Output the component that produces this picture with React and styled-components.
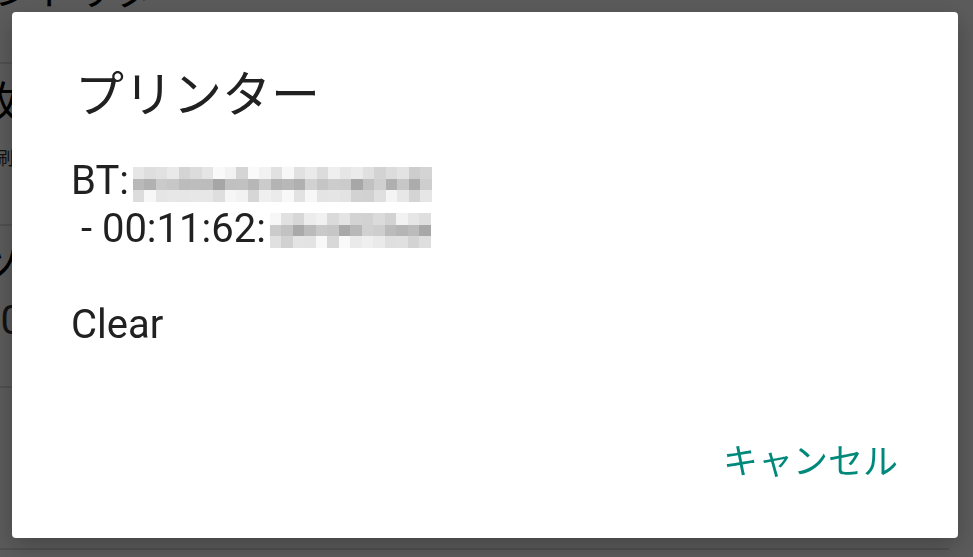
import React from "react";
import styled, { createGlobalStyle } from "styled-components";

const GlobalStyle = createGlobalStyle`
  html, body {
    margin: 0;
    padding: 0;
    background: #ffffff;
    overflow: hidden;
  }
  body {
    font-family: Roboto, "Noto Sans CJK JP", sans-serif;
    color: #212121;
  }
`;

// pixelated (blurred out) parts of the device name / MAC
const shade = (seed, row) => {
  const x = Math.sin(seed * 12.9898 + row * 78.233) * 43758.5453;
  const r = x - Math.floor(x);
  const base = row === 1 ? 165 : 205;
  return Math.round(base + r * 45);
};

const Mosaic = ({ cols, seed, drop }) => {
  const cells = [];
  for (let row = 0; row < 3; row++) {
    for (let c = 0; c < cols; c++) {
      const g = shade(seed + c, row);
      cells.push(
        <Cell key={`${row}-${c}`} style={{ background: `rgb(${g},${g},${g})` }} />
      );
    }
  }
  return (
    <MosaicWrap $drop={drop}>
      <MosaicGrid $cols={cols}>{cells}</MosaicGrid>
    </MosaicWrap>
  );
};

const App = () => {
  return (
    <React.Fragment>
      <GlobalStyle />
      <Screen>
        <TopRow>
          <TopText>ントリター</TopText>
        </TopRow>
        <Row>
          <RowTitle>枚数</RowTitle>
          <RowSub $size={18}>印刷</RowSub>
        </Row>
        <Row>
          <RowTitle>ツール</RowTitle>
          <RowSub $size={40}>20</RowSub>
        </Row>
        <Row />
      </Screen>
      <Scrim>
        <Dialog>
          <Title>プリンター</Title>
          <Body>
            <Line>
              BT:
              <Mosaic cols={26} seed={3} drop={8} />
            </Line>
            <Line>
              {" - 00:11:62:"}
              <Mosaic cols={14} seed={41} drop={6} />
            </Line>
            <Line />
            <Line>Clear</Line>
          </Body>
          <Actions>
            <TextButton>キャンセル</TextButton>
          </Actions>
        </Dialog>
      </Scrim>
    </React.Fragment>
  );
};

export default App;

const Screen = styled.div`
  width: 973px;
  height: 557px;
  margin-left: -24px;
  overflow: hidden;
`;

const TopRow = styled.div`
  height: 64px;
  display: flex;
  align-items: flex-start;
  padding-left: 18px;
  border-bottom: 2px solid #dedede;
  box-sizing: border-box;
`;

const TopText = styled.span`
  font-size: 40px;
  line-height: 40px;
  margin-top: -28px;
  color: #000;
`;

const Row = styled.div`
  height: 162px;
  box-sizing: border-box;
  border-bottom: 2px solid #dedede;
  padding: 14px 0 0 2px;
`;

const RowTitle = styled.div`
  font-size: 42px;
  line-height: 50px;
  color: #000;
`;

const RowSub = styled.div`
  font-size: ${(p) => p.$size}px;
  line-height: 50px;
  color: #333;
  margin-top: 6px;
`;

const Scrim = styled.div`
  position: fixed;
  inset: 0;
  background: rgba(0, 0, 0, 0.645);
  display: flex;
  padding: 12px 15px 19px 12px;
`;

const Dialog = styled.div`
  flex: 1;
  background: #ffffff;
  border-radius: 4px;
  display: flex;
  flex-direction: column;
  box-shadow: 0 8px 24px rgba(0, 0, 0, 0.25);
`;

const Title = styled.h2`
  margin: 0;
  padding: 50px 58px 0 63px;
  font-family: "Noto Sans CJK JP", sans-serif;
  font-weight: 400;
  font-size: 49px;
  line-height: 58px;
  color: #212121;
`;

const Body = styled.div`
  padding: 37px 58px 0 59px;
`;

const Line = styled.div`
  font-size: 40px;
  line-height: 48px;
  height: 48px;
  white-space: pre;
  color: #212121;
`;

const MosaicWrap = styled.span`
  display: inline-block;
  overflow: hidden;
  margin-left: 4px;
  vertical-align: -${(p) => p.$drop}px;
`;

const MosaicGrid = styled.div`
  display: grid;
  grid-template-columns: repeat(${(p) => p.$cols}, 11.5px);
  grid-auto-rows: 11.7px;
`;

const Cell = styled.div``;

const Actions = styled.div`
  margin-top: auto;
  display: flex;
  justify-content: flex-end;
  padding: 0 42px 47px 0;
`;

const TextButton = styled.button`
  border: none;
  background: transparent;
  padding: 8px 18px;
  font-family: "Noto Sans CJK JP", sans-serif;
  font-weight: 400;
  font-size: 35px;
  line-height: 48px;
  color: #00897b;
  cursor: pointer;
`;
